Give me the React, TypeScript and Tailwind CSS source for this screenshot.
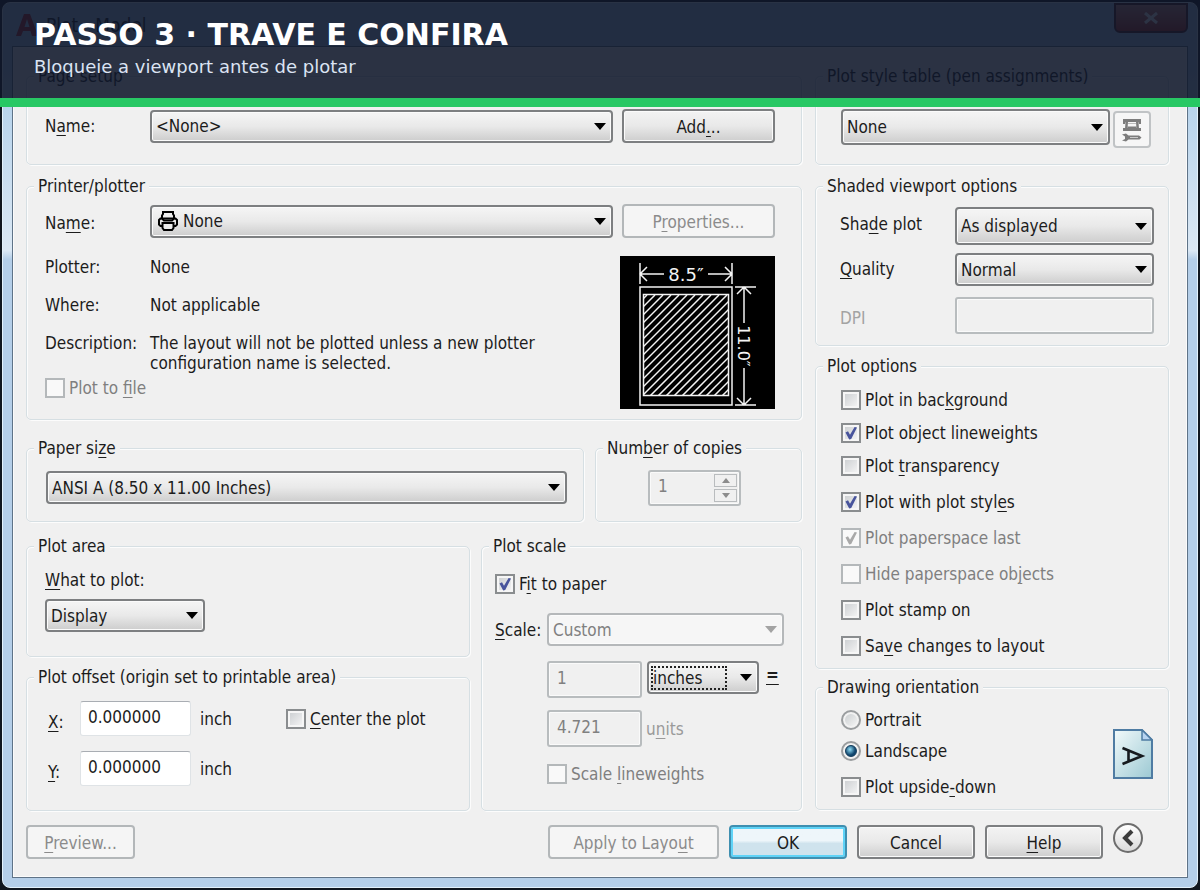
import { useId, type ReactNode } from "react";

const cx = (...parts: (string | false | undefined)[]) => parts.filter(Boolean).join(" ");

/* Renders a caption in which the character after "&" is the keyboard accelerator. */
function Caption({ text }: { text: string }) {
  const at = text.indexOf("&");
  if (at < 0) return <>{text}</>;
  return (
    <>
      {text.slice(0, at)}
      <span className="underline decoration-1 underline-offset-3">{text[at + 1]}</span>
      {text.slice(at + 2)}
    </>
  );
}

interface GroupProps {
  title: string;
  className?: string;
  inner?: string;
  children: ReactNode;
}

function Group({ title, className, inner, children }: GroupProps) {
  return (
    <fieldset
      className={cx(
        "min-w-0 rounded-[5px] border border-[#d6dfe3] shadow-[inset_1px_1px_0_#fcfcfc,1px_1px_0_#fcfcfc]",
        className,
      )}
    >
      <legend className="ml-[7px] bg-[#f0f0f0] px-1 leading-5">
        <Caption text={title} />
      </legend>
      <div className={inner}>{children}</div>
    </fieldset>
  );
}

interface DropProps {
  id?: string;
  label?: string;
  value: string;
  disabled?: boolean;
  focused?: boolean;
  className?: string;
  icon?: ReactNode;
}

function Drop({ id, label, value, disabled, focused, className, icon }: DropProps) {
  return (
    <div className={cx("grid min-w-0 items-center", className ?? "h-[33px]")}>
      <select
        id={id}
        aria-label={label}
        disabled={disabled}
        defaultValue={value}
        className={cx(
          "col-start-1 row-start-1 h-full w-full appearance-none rounded-[4px] border-2 pr-7 shadow-[inset_0_0_0_1px_#fbfbfb] outline-none disabled:opacity-100",
          icon ? "pl-[31px]" : "pl-1",
          disabled
            ? "border-[#b5b8ba] bg-[#f6f6f6] text-[#808080]"
            : "border-[#7d7f81] bg-linear-to-b from-[#f3f3f3] from-10% via-[#e9e9e9] via-50% to-[#cdcdcd]",
        )}
      >
        <option>{value}</option>
      </select>
      {icon && <span className="pointer-events-none col-start-1 row-start-1 ml-2 justify-self-start">{icon}</span>}
      {focused && (
        <span className="pointer-events-none col-start-1 row-start-1 mr-8 ml-1 h-6 self-center border-2 border-dotted border-[#222]" />
      )}
      <svg
        viewBox="0 0 12 7"
        className={cx(
          "pointer-events-none col-start-1 row-start-1 mr-[7px] h-[7px] w-3 justify-self-end",
          disabled ? "fill-[#a3a3a3]" : "fill-black",
        )}
      >
        <path d="M0 0h12L6 7z" />
      </svg>
    </div>
  );
}

interface PushButtonProps {
  text: string;
  disabled?: boolean;
  primary?: boolean;
  className?: string;
}

function PushButton({ text, disabled, primary, className }: PushButtonProps) {
  return (
    <button
      type="button"
      disabled={disabled}
      className={cx(
        "h-[34px] rounded-[4px] border-2 pt-0.5 leading-5 whitespace-nowrap",
        disabled && "border-[#b3b7b9] bg-[#f5f5f5] text-[#8b8b8b]",
        primary &&
          "border-[#3f8fb0] bg-linear-to-b from-[#eef6fa] from-45% to-[#cfe3ed] to-55% shadow-[inset_0_0_0_2px_#5fd3f7]",
        !disabled &&
          !primary &&
          "border-[#7d7f81] bg-linear-to-b from-[#f3f3f3] via-[#e9e9e9] via-50% to-[#cecece] shadow-[inset_0_0_0_1px_#fbfbfb]",
        className,
      )}
    >
      <Caption text={text} />
    </button>
  );
}

interface CheckProps {
  text: string;
  checked?: boolean;
  disabled?: boolean;
  className?: string;
}

function Check({ text, checked, disabled, className }: CheckProps) {
  const id = useId();
  return (
    <div className={cx("flex h-5 items-center gap-1", className)}>
      <span className="grid size-5 shrink-0">
        <input
          id={id}
          type="checkbox"
          defaultChecked={checked}
          disabled={disabled}
          className={cx(
            "col-start-1 row-start-1 size-5 appearance-none border-2",
            disabled
              ? "border-[#b4b8ba] bg-[#f9f9f9]"
              : "border-[#8a8d8f] bg-linear-to-br from-[#c9cccf] to-[#f8f8f8] shadow-[inset_0_0_0_2px_#f6f6f6]",
          )}
        />
        {checked && (
          <svg
            viewBox="0 0 20 20"
            className={cx(
              "pointer-events-none col-start-1 row-start-1 size-5",
              disabled ? "fill-[#a9a9a9]" : "fill-[#48549c]",
            )}
          >
            <path d="M4.500 9.500 7 8.200l2 3.600L13.600 4l2.400.6L10.200 16 8.200 16.500z" />
          </svg>
        )}
      </span>
      <label htmlFor={id} className={cx("leading-5 whitespace-nowrap", disabled && "text-[#7f7f7f]")}>
        <Caption text={text} />
      </label>
    </div>
  );
}

function Radio({ text, checked }: { text: string; checked?: boolean }) {
  const id = useId();
  return (
    <div className="flex h-5 items-center gap-1">
      <span className="grid size-5 shrink-0 place-items-center">
        <input
          id={id}
          type="radio"
          name="orientation"
          defaultChecked={checked}
          className="col-start-1 row-start-1 size-5 appearance-none rounded-full border-2 border-[#9a9d9f] bg-linear-to-br from-[#c6cacc] to-[#fafafa] shadow-[inset_0_0_0_2px_#f2f2f2]"
        />
        {checked && (
          <span className="pointer-events-none col-start-1 row-start-1 size-3 rounded-full border border-[#123c5c] bg-radial-[at_40%_35%] from-[#8fdcf5] to-[#10466e] to-60%" />
        )}
      </span>
      <label htmlFor={id} className="leading-5">
        {text}
      </label>
    </div>
  );
}

const disabledField =
  "h-[37px] w-full min-w-0 rounded-[3px] border-2 border-[#b8bcbe] bg-[#f0f0f0] pb-1 pl-2 text-[#808080] shadow-[inset_0_0_0_1px_#fafafa]";

const offsetField =
  "h-[35px] w-full rounded-[3px] border border-[#dfe3e6] border-t-[#a9adb3] bg-white pb-1 pl-[7px]";

function PrinterIcon() {
  return (
    <svg viewBox="0 0 20 20" className="size-5 fill-none stroke-black stroke-2">
      <path d="M4 7V4.500L5 3V1H15V3L16 4.500V7" />
      <path d="M2.500 7.500H17.500L19 9V13.500L17.500 15H2.500L1 13.500V9z" />
      <path d="M4.500 12H15.500V17L14 19H6L4.500 17z" className="fill-[#ededed]" />
      <path d="M4 7.500 6 9.500H14L16 7.500" />
    </svg>
  );
}

function PaperPreview() {
  const lines = Array.from({ length: 25 }, (_, i) => i * 8 + 4);
  return (
    <svg viewBox="0 0 155 153" className="h-[153px] w-[155px] bg-black" role="img" aria-label="8.5 by 11.0 inches">
      <defs>
        <clipPath id="printable">
          <rect x="23" y="39" width="85" height="101" />
        </clipPath>
      </defs>
      <g fill="none" stroke="#f4f4f4" strokeWidth="1.500">
        <rect x="20" y="31" width="92" height="118" />
        <rect x="23.500" y="38.500" width="85" height="101" />
        <g clipPath="url(#printable)">
          {lines.map((n) => (
            <path key={n} d={`M${23 + n} 39L${23 + n - 110} 149`} />
          ))}
        </g>
        <path d="M20 7V28M112 7V28M20 18H44M88 18H112M27 11 20 18 27 25M105 11 112 18 105 25" />
        <path d="M115 31H136M115 149H136M124 31V67M124 112V149M117 38 124 31 131 38M117 142 124 149 131 142" />
      </g>
      <g fill="#f4f4f4" fontFamily="'DejaVu Sans', sans-serif">
        <text x="66" y="25" textAnchor="middle" fontSize="18">
          8.5″
        </text>
        <text x="90" y="-118" textAnchor="middle" fontSize="16" transform="rotate(90)">
          11.0″
        </text>
      </g>
    </svg>
  );
}

function StyleTableIcon() {
  return (
    <svg viewBox="0 0 20 24" className="mx-auto h-6 w-5" aria-hidden="true">
      <g fill="#7d7d7d">
        <path d="M1 1H19V6H17L16.500 4H3.500L3 6H1z" />
        <path d="M3.500 4H6L5.500 11H3zM14 4H16.500L17 11H14.500z" />
        <path d="M1 10H5.500V8.500H14.500V10H19V13H1z" />
        <path d="M0 16.500 4 15.500 6.500 17.500H17L19.500 19.500 17.500 21.500H6.500L4 23.500 0 22.500 3 21V18.500z" />
      </g>
      <path d="M6 5.500H14" stroke="#bdbdbd" />
      <path d="M8 19.500H16" stroke="#c9c9c9" />
    </svg>
  );
}

function OrientationIcon() {
  return (
    <svg viewBox="0 0 40 50" className="h-[50px] w-10 shrink-0" aria-hidden="true">
      <defs>
        <linearGradient id="sheet" x1="0" y1="0" x2="1" y2="1">
          <stop offset="0" stopColor="#f2fafb" />
          <stop offset="1" stopColor="#9cc9d3" />
        </linearGradient>
      </defs>
      <path d="M1 1H29L39 11V49H1z" fill="url(#sheet)" stroke="#4f7ca3" strokeWidth="2" />
      <path d="M29 1V11H39z" fill="#b7d3f0" stroke="#4f7ca3" strokeWidth="1.500" />
      <path d="M9.500 19 29 27 9.500 35M15.500 22V32.500" fill="none" stroke="#161a1e" strokeWidth="2.600" />
    </svg>
  );
}

function Banner() {
  return (
    <header className="absolute inset-x-0 top-0 h-[107px] border-b-[9px] border-[#28c864] bg-[#0f172a]/88 pt-[15px] pl-[34px] font-['DejaVu_Sans',sans-serif]">
      <h1 className="text-[30px] leading-10 font-bold text-white">PASSO 3 · TRAVE E CONFIRA</h1>
      <p className="text-[18px] leading-6 text-[#dbe4f3]">Bloqueie a viewport antes de plotar</p>
    </header>
  );
}

export default function App() {
  return (
    <div className="relative min-h-screen bg-[#10161e] p-0.5 font-['DejaVu_Sans_Condensed','DejaVu_Sans',sans-serif] text-[17px] leading-5 text-[#1c1c1c]">
      <div className="rounded-lg border border-[#e3f1fb] bg-linear-to-b from-[#a9cbe8] from-5% via-[#dbe8f4] via-28% to-[#b4cee8] to-29% px-[9px] pb-[9px]">
        <div className="flex h-[43px] items-center gap-2 pl-1">
          <svg viewBox="0 0 22 22" className="size-[22px] fill-[#b02020]" aria-hidden="true">
            <path d="M0 22 8 0H14L22 22H16L14.500 17H7L5 22zM8.500 13H13.500L11 5z" />
          </svg>
          <h2 className="text-[19px]">Plot - Model</h2>
          <button
            type="button"
            aria-label="Close"
            className="ml-auto grid h-[30px] w-[74px] place-items-center self-start rounded-b-[6px] border-2 border-[#4a1a1a] bg-linear-to-b from-[#c98a80] to-[#b02a1c]"
          >
            <svg viewBox="0 0 14 12" className="h-3 w-[14px] fill-none stroke-white stroke-3">
              <path d="M1 1 13 11M13 1 1 11" />
            </svg>
          </button>
        </div>

        <main className="border border-[#5f7387] bg-[#f0f0f0] pt-[19px] pr-[18px] pb-[18px] pl-[13px] shadow-[inset_0_0_0_1px_#fbfbfb]">
          <div className="grid grid-cols-[minmax(0,1fr)_354px] gap-x-[13px]">
            <div>
              <Group title="Page setup" className="h-[99px]">
                <div className="grid grid-cols-[105px_minmax(0,1fr)_153px] items-center pt-[23px] pr-[26px] pl-[18px]">
                  <label htmlFor="setup-name">
                    <Caption text="N&ame:" />
                  </label>
                  <Drop id="setup-name" value="<None>" className="mr-[9px] h-[33px]" />
                  <PushButton text="Add&..." />
                </div>
              </Group>

              <Group title="Printer/plotter" className="mt-[11px]" inner="pr-[26px] pb-[10px] pl-[18px]">
                <div className="grid grid-cols-[105px_minmax(0,1fr)_153px] items-center pt-2">
                  <label htmlFor="printer-name" className="pt-1">
                    <Caption text="Na&me:" />
                  </label>
                  <Drop id="printer-name" value="None" className="mr-[9px] h-[33px]" icon={<PrinterIcon />} />
                  <PushButton text="P&roperties..." disabled />
                </div>
                <div className="flex justify-between pt-[18px]">
                  <div>
                    <dl className="grid grid-cols-[105px_minmax(0,400px)] gap-y-[18px] pt-px">
                      <dt>Plotter:</dt>
                      <dd>None</dd>
                      <dt>Where:</dt>
                      <dd>Not applicable</dd>
                      <dt>Description:</dt>
                      <dd>The layout will not be plotted unless a new plotter configuration name is selected.</dd>
                    </dl>
                    <Check text="Plot to &file" disabled className="mt-[5px]" />
                  </div>
                  <PaperPreview />
                </div>
              </Group>

              <div className="mt-[18px] grid grid-cols-[minmax(0,1fr)_207px] gap-x-[11px]">
                <Group title="Paper si&ze" className="h-[84px]" inner="pt-[13px] pr-4 pl-[19px]">
                  <Drop label="Paper size" value="ANSI A (8.50 x 11.00 Inches)" />
                </Group>
                <Group title="Num&ber of copies" className="h-[84px]" inner="pt-3 pl-[52px]">
                  <div className="flex h-9 w-[93px] rounded-[3px] border-2 border-[#b8bcbe] shadow-[inset_0_0_0_1px_#fafafa]">
                    <input
                      aria-label="Number of copies"
                      defaultValue="1"
                      disabled
                      className="w-full min-w-0 pb-1 pl-2 text-[#808080]"
                    />
                    <div className="flex shrink-0 flex-col gap-0.5 p-0.5">
                      {["M0 5 4 0 8 5z", "M0 0 4 5 8 0z"].map((d, i) => (
                        <button
                          key={d}
                          type="button"
                          disabled
                          aria-label={i ? "Fewer copies" : "More copies"}
                          className="grid w-[23px] flex-1 place-items-center border border-[#b9bcbe]"
                        >
                          <svg viewBox="0 0 8 5" className="h-[5px] w-2 fill-[#8c8c8c]">
                            <path d={d} />
                          </svg>
                        </button>
                      ))}
                    </div>
                  </div>
                </Group>
              </div>

              <div className="mt-[14px] grid grid-cols-[minmax(0,1fr)_321px] gap-x-[11px]">
                <div>
                  <Group title="Plot area" className="h-[121px]" inner="pt-[14px] pl-[18px]">
                    <label htmlFor="what" className="block">
                      <Caption text="&What to plot:" />
                    </label>
                    <Drop id="what" value="Display" className="mt-[9px] h-[33px] w-40" />
                  </Group>
                  <Group
                    title="Plot offset (origin set to printable area)"
                    className="mt-[10px] h-[144px]"
                    inner="pt-[14px] pl-[21px]"
                  >
                    <div className="grid grid-cols-[32px_111px_95px_1fr] items-center gap-y-[15px]">
                      <label htmlFor="off-x" className="pt-1.5">
                        <Caption text="&X:" />
                      </label>
                      <input id="off-x" defaultValue="0.000000" className={offsetField} />
                      <span className="pl-[9px]">inch</span>
                      <Check text="&Center the plot" />
                      <label htmlFor="off-y" className="pt-1.5">
                        <Caption text="&Y:" />
                      </label>
                      <input id="off-y" defaultValue="0.000000" className={offsetField} />
                      <span className="pl-[9px]">inch</span>
                    </div>
                  </Group>
                </div>

                <Group title="Plot scale" inner="pt-[18px] pr-[17px] pl-[13px]">
                  <Check text="F&it to paper" checked />
                  <div className="mt-[19px] grid grid-cols-[52px_95px_minmax(0,1fr)]">
                    <label htmlFor="scale" className="self-center">
                      <Caption text="&Scale:" />
                    </label>
                    <Drop id="scale" value="Custom" disabled className="col-span-2 h-[33px]" />
                    <input
                      aria-label="Paper units"
                      defaultValue="1"
                      disabled
                      className={cx(disabledField, "col-start-2 mt-[15px]")}
                    />
                    <div className="mt-[15px] ml-[5px] flex items-start gap-[7px]">
                      <Drop label="Unit" value="inches" focused className="h-[33px] w-28" />
                      <span className="pt-1 font-bold">
                        <Caption text="&=" />
                      </span>
                    </div>
                    <input
                      id="units"
                      defaultValue="4.721"
                      disabled
                      className={cx(disabledField, "col-start-2 mt-3")}
                    />
                    <label htmlFor="units" className="mt-3 self-center pl-1 text-[#9a9a9a]">
                      <Caption text="u&nits" />
                    </label>
                    <Check text="Scale &lineweights" disabled className="col-span-2 col-start-2 mt-[17px]" />
                  </div>
                </Group>
              </div>
            </div>

            <div>
              <Group
                title="Plot style table (pen assignments)"
                className="h-[99px]"
                inner="pt-[23px] pr-[17px] pl-[25px]"
              >
                <div className="flex gap-[3px]">
                  <Drop label="Plot style table" value="None" className="h-9 flex-1" />
                  <button
                    type="button"
                    disabled
                    aria-label="Edit plot style"
                    className="mt-0.5 h-[37px] w-[38px] rounded-[4px] border-2 border-[#c0c3c5] bg-[#f6f6f6]"
                  >
                    <StyleTableIcon />
                  </button>
                </div>
              </Group>

              <Group
                title="Shaded viewport options"
                className="mt-[11px]"
                inner="pt-[11px] pr-[14px] pb-[11px] pl-6"
              >
                <div className="grid grid-cols-[115px_minmax(0,1fr)] items-center">
                  <label htmlFor="shade" className="pb-1">
                    <Caption text="Sha&de plot" />
                  </label>
                  <Drop id="shade" value="As displayed" className="h-[38px]" />
                  <label htmlFor="quality" className="pt-1.5">
                    <Caption text="&Quality" />
                  </label>
                  <Drop id="quality" value="Normal" className="mt-2 h-[33px]" />
                  <label htmlFor="dpi" className="pt-4 text-[#a3a3a3]">
                    DPI
                  </label>
                  <input id="dpi" disabled className={cx(disabledField, "mt-[11px]")} />
                </div>
              </Group>

              <Group title="Plot options" className="mt-[10px]" inner="pt-[14px] pb-3 pl-[25px]">
                <div className="flex flex-col gap-[13px]">
                  <Check text="Plot in bac&kground" />
                  <Check text="Plot object lineweights" checked />
                  <Check text="Plot &transparency" />
                </div>
                <div className="mt-4 flex flex-col gap-4">
                  <Check text="Plot with plot styl&es" checked />
                  <Check text="Plot paperspace last" checked disabled />
                  <Check text="Hide paperspace ob&jects" disabled />
                  <Check text="Plot stamp on" />
                  <Check text="Sa&ve changes to layout" />
                </div>
              </Group>

              <Group title="Drawing orientation" className="mt-2" inner="pt-[13px] pr-[15px] pb-3 pl-[25px]">
                <div className="flex items-center justify-between">
                  <div>
                    <div className="flex flex-col gap-[11px]">
                      <Radio text="Portrait" />
                      <Radio text="Landscape" checked />
                    </div>
                    <Check text="Plot upside&-down" className="mt-4" />
                  </div>
                  <OrientationIcon />
                </div>
              </Group>
            </div>
          </div>

          <footer className="mt-[14px] flex items-start gap-[10px] pr-[26px]">
            <PushButton text="&Preview..." disabled className="mr-auto w-[109px]" />
            <PushButton text="Apply to Layo&ut" disabled className="w-[171px]" />
            <PushButton text="OK" primary className="w-[118px]" />
            <PushButton text="Cancel" className="w-[118px]" />
            <PushButton text="&Help" className="w-[118px]" />
            <button
              type="button"
              aria-label="Less options"
              className="-mt-0.5 grid size-[30px] place-items-center rounded-full border-2 border-[#6d6d6d] bg-linear-to-b from-white to-[#d9d9d9]"
            >
              <svg viewBox="0 0 14 18" className="h-[18px] w-[14px] fill-none stroke-[#3b3b3b] stroke-4">
                <path d="M11 2 4 9 11 16" />
              </svg>
            </button>
          </footer>
        </main>
      </div>
      <Banner />
    </div>
  );
}
